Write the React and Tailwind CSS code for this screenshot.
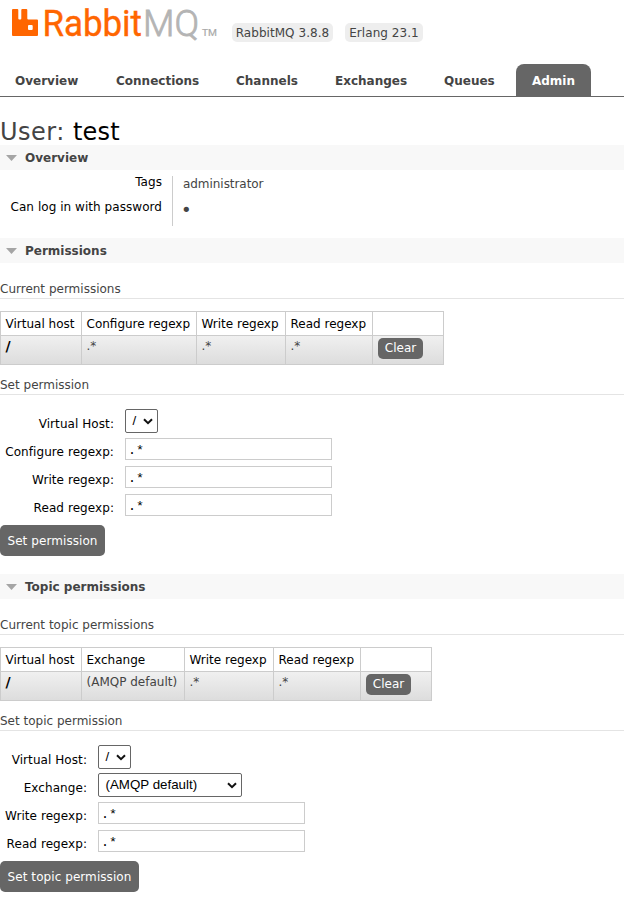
const tabs = [
  { label: 'Overview', cls: 'w-[101px] pl-[15px]' },
  { label: 'Connections', cls: 'w-[120px] pl-[15px]' },
  { label: 'Channels', cls: 'w-[99px] pl-[15px]' },
  { label: 'Exchanges', cls: 'w-[109px] pl-[15px]' },
  { label: 'Queues', cls: 'w-[87px] pl-[15px]' },
];

function Logo() {
  return (
    <svg width="210" height="46" viewBox="8 0 210 46" className="block shrink-0">
      <path fill="#f60" d="M13 9h4.300q1 0 1 1v8.500q0 1 1 1h1q1 0 1-1v-8.500q0-1 1-1h4q1 0 1 1v8.500q0 1 1 1h8.700q1 0 1 1v14.500q0 1-1 1H13q-1 0-1-1V10q0-1 1-1zM29 25q-1 0-1 1v3q0 1 1 1h2.700q1 0 1-1v-3q0-1-1-1z" />
      <g fontFamily="Roboto, sans-serif" fontSize="36">
        <text x="42.500" y="36" fill="#f60" stroke="#f60" strokeWidth="0.400" textLength="99.500" lengthAdjust="spacingAndGlyphs">Rabbit</text>
        <text x="143" y="36" fill="#b4b4b4" stroke="#b4b4b4" strokeWidth="0.800" fontWeight="300" textLength="56" lengthAdjust="spacingAndGlyphs">MQ</text>
        <text x="202" y="36" fill="#aaa" stroke="#aaa" strokeWidth="0.200" fontSize="9" textLength="15" lengthAdjust="spacingAndGlyphs">TM</text>
      </g>
    </svg>
  );
}

function Heading({ children, className = '' }) {
  return (
    <h2 className={`flex h-[25px] items-center bg-[#f8f8f8] text-[12px] font-bold text-[#444] ${className}`}>
      <svg width="25" height="25" className="shrink-0"><path d="M6 10h11l-5.500 6z" fill="#a5a5a5" /></svg>
      {children}
    </h2>
  );
}

function Sub({ children, className = '' }) {
  return <h3 className={`h-[18px] border-b border-[#e4e4e4] text-[12px] leading-[16px] text-[#444] ${className}`}>{children}</h3>;
}

function PermTable({ cols, values, className = '' }) {
  return (
    <table className={`table-fixed border-collapse text-left text-[12px] ${className}`}>
      <colgroup>{cols.map((c, i) => <col key={i} className={c.w} />)}</colgroup>
      <thead>
        <tr className="h-6">
          {cols.map((c, i) => <th key={i} className="border border-[#ccc] py-0 pr-0 pl-[4.5px] font-normal whitespace-nowrap text-black">{c.t}</th>)}
        </tr>
      </thead>
      <tbody>
        <tr className="h-[29px] bg-linear-to-b from-[#f0f0f0] to-[#dcdcdc] text-[#444]">
          {values.map((v, i) => (
            <td key={i} className={`border border-[#ccc] py-0 pr-0 pl-[4.5px] align-top leading-[20px] whitespace-nowrap ${i === 0 ? 'text-[14px] font-bold text-black' : ''}`}>{v}</td>
          ))}
          <td className="border border-[#ccc] py-0 pr-0 pl-[5px] align-top">
            <button className="mt-[2px] block h-[21px] w-[45px] rounded-[5px] bg-[#666] text-[12px] leading-[21px] text-white">Clear</button>
          </td>
        </tr>
      </tbody>
    </table>
  );
}

function Select({ className, children }) {
  return (
    <div className={`flex h-6 items-center justify-between rounded-[2px] border border-[#666] bg-white pr-[4px] pl-[6.5px] font-['Liberation_Sans',sans-serif] text-[13.33px] text-black ${className}`}>
      <span>{children}</span>
      <svg width="10" height="7" viewBox="0 0 10 7"><path d="M1 1.200l4 4 4-4" fill="none" stroke="#111" strokeWidth="2" /></svg>
    </div>
  );
}

function Field({ label, labelClass, children }) {
  return (
    <div className="flex h-7 items-start">
      <label className={`shrink-0 pt-[6px] text-right text-[12px] leading-[18px] tracking-[0.07px] text-black ${labelClass}`}>{label}</label>
      <div className="ml-[11px]">{children}</div>
    </div>
  );
}

function Input() {
  return <div className="mt-[1px] h-[22px] w-[207px] border border-[#ccc] pl-[2px] font-['Liberation_Mono',monospace] text-[13.33px] leading-[23px] text-black">.*</div>;
}

function Submit({ className, children }) {
  return <button className={`block h-[31px] rounded-[5px] bg-[#666] text-[12px] tracking-[0.07px] text-white ${className}`}>{children}</button>;
}

export default function App() {
  return (
    <div className="h-[907px] w-[624px] overflow-hidden bg-white font-['DejaVu_Sans',sans-serif] text-[12px]">
      <header className="flex h-16 items-start pl-2">
        <Logo />
        <div className="mt-[23px] ml-[14px] flex gap-3 text-[#444]">
          <span className="h-[19px] w-[101px] rounded-[5px] bg-[#eee] text-center leading-[20px] tracking-[0.05px]">RabbitMQ 3.8.8</span>
          <span className="h-[19px] w-[78px] rounded-[5px] bg-[#eee] text-center leading-[20px] tracking-[0.05px]">Erlang 23.1</span>
        </div>
      </header>
      <nav className="flex h-[33px] border-b border-[#666] text-[12px] leading-[34px] font-bold text-[#444]">
        {tabs.map((t) => <a key={t.label} className={`shrink-0 ${t.cls}`}>{t.label}</a>)}
        <a className="h-8 w-[75px] rounded-t-[8px] bg-[#666] text-center text-white">Admin</a>
      </nav>
      <h1 className="h-12 pt-[21px] text-[24px] leading-[28px] tracking-[0.5px] whitespace-pre text-[#444]">User: <span className="tracking-[0.2px] text-black">test</span></h1>
      <Heading>Overview</Heading>
      <div className="flex h-[68px] pt-[6px]">
        <div className="w-[162px] text-right leading-[12px] tracking-[0.05px] text-black">
          <div className="h-[25px]">Tags</div>
          <div>Can log in with password</div>
        </div>
        <div className="ml-[10px] h-[50px] border-l border-[#ccc] pl-[10px] leading-[16px] text-[#444]">
          <div className="h-[26px] tracking-[-0.05px]">administrator</div>
          <div className="-ml-[2px] text-[18px] leading-[15px]">•</div>
        </div>
      </div>
      <Heading>Permissions</Heading>
      <Sub className="mt-[18px]">Current permissions</Sub>
      <PermTable
        className="mt-3 w-[444px]"
        cols={[{ t: 'Virtual host', w: 'w-[81px]' }, { t: 'Configure regexp', w: 'w-[115px]' }, { t: 'Write regexp', w: 'w-[89px]' }, { t: 'Read regexp', w: 'w-[87px]' }, { t: '', w: 'w-[71px]' }]}
        values={['/', '.*', '.*', '.*']}
      />
      <Sub className="mt-3">Set permission</Sub>
      <div className="mt-[14px]">
        <Field label="Virtual Host:" labelClass="w-[114px]"><Select className="w-[33px]">/</Select></Field>
        <Field label="Configure regexp:" labelClass="w-[114px]"><Input /></Field>
        <Field label="Write regexp:" labelClass="w-[114px]"><Input /></Field>
        <Field label="Read regexp:" labelClass="w-[114px]"><Input /></Field>
      </div>
      <Submit className="mt-1 w-[105px]">Set permission</Submit>
      <Heading className="mt-[18px]">Topic permissions</Heading>
      <Sub className="mt-[18px]">Current topic permissions</Sub>
      <PermTable
        className="mt-3 w-[432px]"
        cols={[{ t: 'Virtual host', w: 'w-[81px]' }, { t: 'Exchange', w: 'w-[103px]' }, { t: 'Write regexp', w: 'w-[89px]' }, { t: 'Read regexp', w: 'w-[87px]' }, { t: '', w: 'w-[71px]' }]}
        values={['/', '(AMQP default)', '.*', '.*']}
      />
      <Sub className="mt-3">Set topic permission</Sub>
      <div className="mt-[14px]">
        <Field label="Virtual Host:" labelClass="w-[87px]"><Select className="w-[33px]">/</Select></Field>
        <Field label="Exchange:" labelClass="w-[87px]"><Select className="w-[144px]">(AMQP default)</Select></Field>
        <Field label="Write regexp:" labelClass="w-[87px]"><Input /></Field>
        <Field label="Read regexp:" labelClass="w-[87px]"><Input /></Field>
      </div>
      <Submit className="mt-1 w-[139px]">Set topic permission</Submit>
    </div>
  );
}
